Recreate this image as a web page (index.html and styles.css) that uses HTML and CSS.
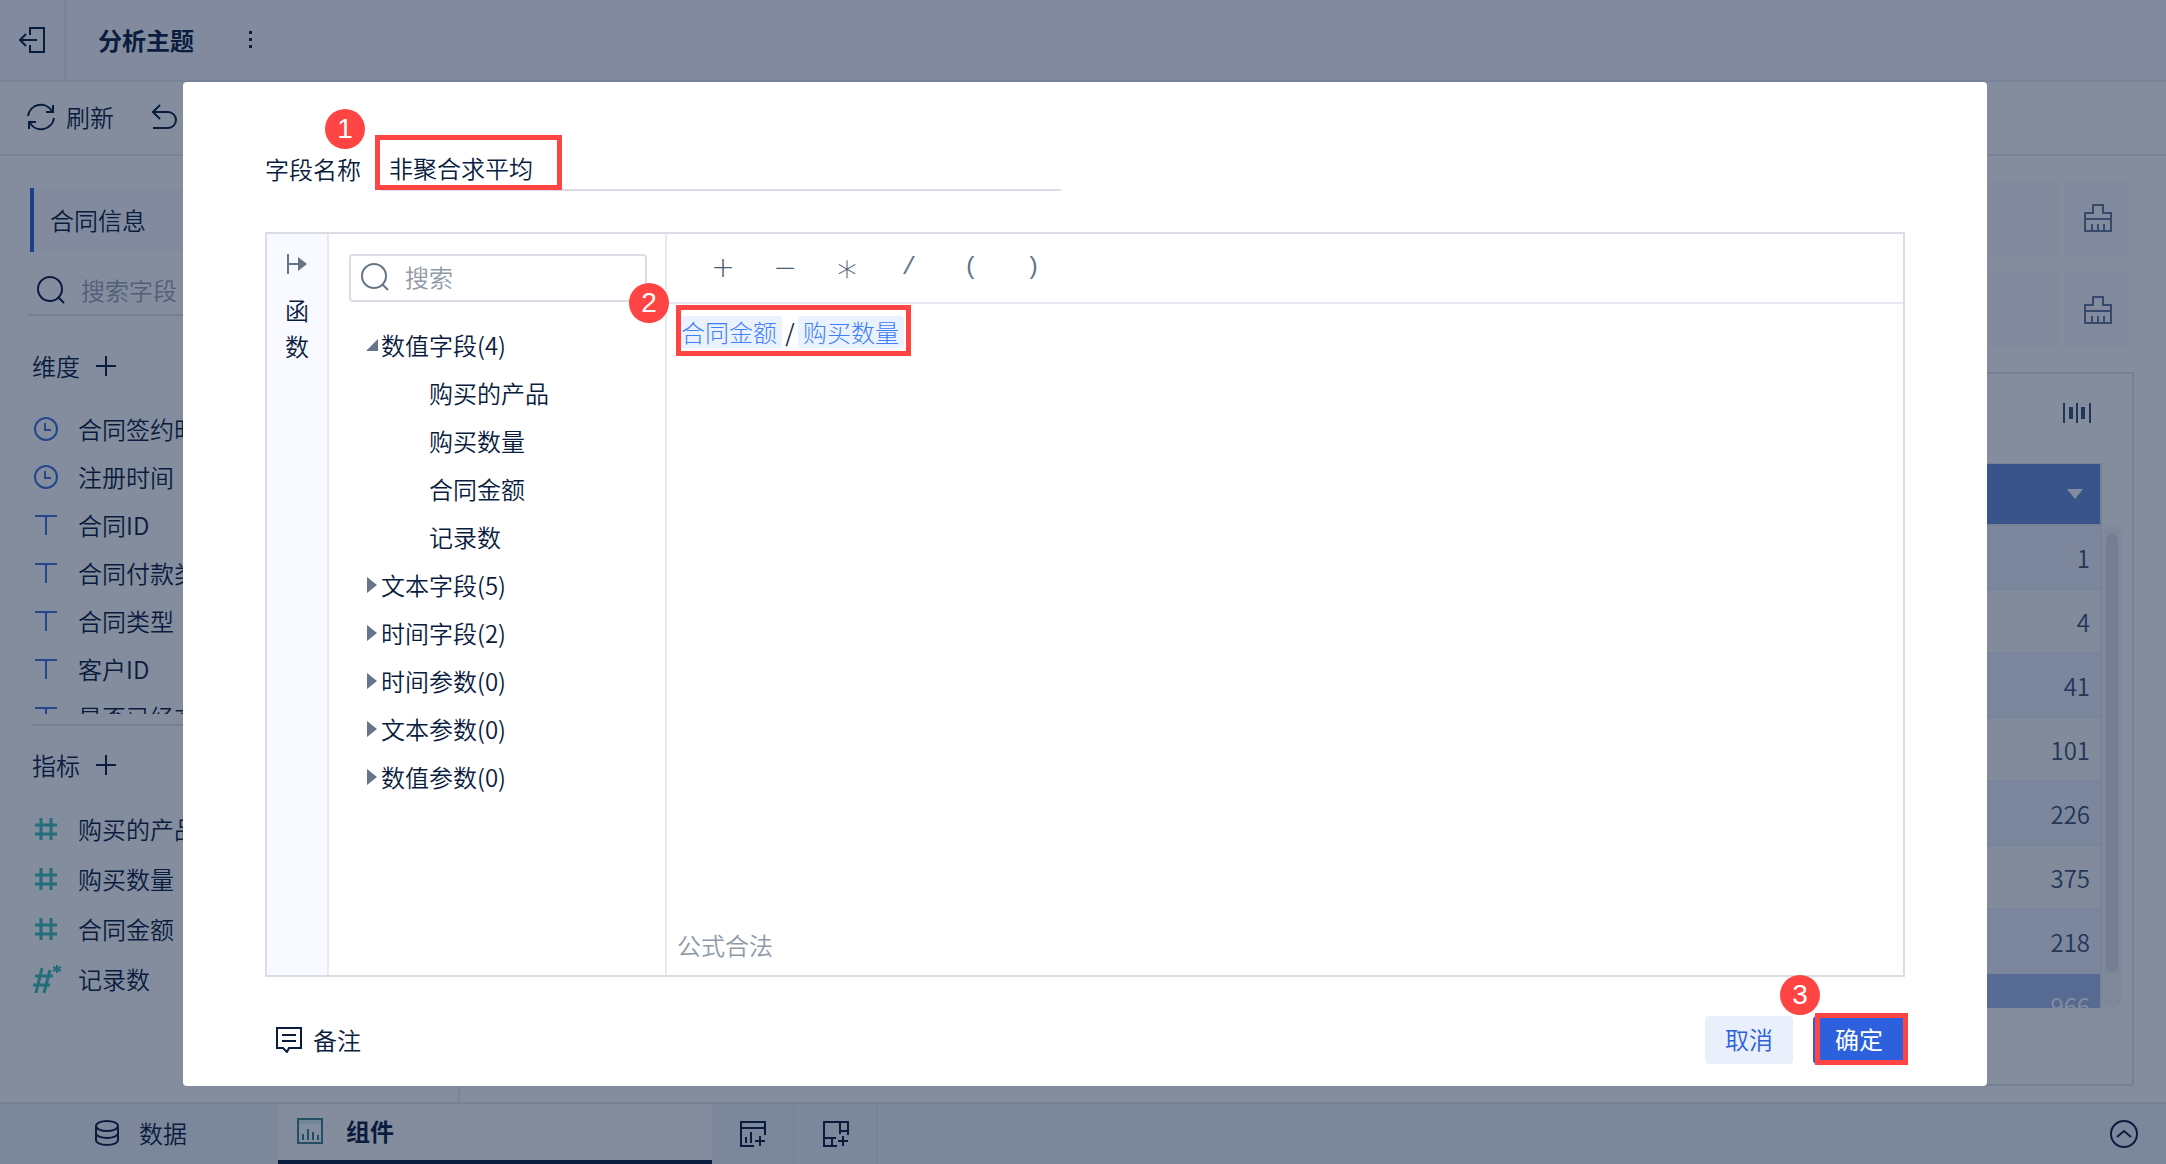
FILE: index.html
```html
<!DOCTYPE html>
<html lang="zh-CN">
<head>
<meta charset="utf-8">
<meta name="viewport" content="width=device-width, initial-scale=1">
<title>分析主题</title>
<link rel="stylesheet" href="styles.css">
</head>
<body>
<svg class="defs" aria-hidden="true">
  <symbol id="i-clock" viewBox="0 0 24 24"><circle cx="12" cy="12" r="11"/><path d="M11 6v7h6"/></symbol>
  <symbol id="i-text" viewBox="0 0 24 24"><path d="M1 3h22M12 3v19"/></symbol>
  <symbol id="i-hash" viewBox="0 0 24 24"><path d="M1 8h22M1 17h22M7 1v22M17 1v22"/></symbol>
  <symbol id="i-plus" viewBox="0 0 20 20"><path d="M10 0v20M0 10h20"/></symbol>
  <symbol id="i-search" viewBox="0 0 28 28"><circle cx="13" cy="13" r="12"/><path d="M21 21l6 6"/></symbol>
  <symbol id="i-brush" viewBox="0 0 28 28"><path d="M1 27V9h8V1h10v8h8v18zM1 15h26M8 27v-7M14 27v-7M20 27v-7"/></symbol>
</svg>

<div class="app">
  <header class="header">
    <button class="exit" aria-label="退出"><svg width="26" height="26" viewBox="0 0 26 26"><path d="M11 8V1h14v24H11v-7M18 13H1M7 7l-6 6 6 6"/></svg></button>
    <h1 class="title">分析主题</h1>
    <button class="more" aria-label="更多"><svg width="4" height="18" viewBox="0 0 4 18"><path class="solid" d="M0 0h3v3H0zM0 7h3v3H0zM0 14h3v3H0z"/></svg></button>
  </header>
  <div class="toolbar">
    <button class="tool"><svg width="28" height="28" viewBox="0 0 28 28"><path d="M1 13A13 13 0 0 1 25 8M26 2v7h-7M27 15A13 13 0 0 1 3 20M2 26v-7h7"/></svg>刷新</button>
    <button class="tool" aria-label="撤销"><svg width="26" height="26" viewBox="0 0 26 26"><path d="M8 1L1 8l7 7M1 8h15a8 8 0 0 1 0 16H1"/></svg></button>
  </div>

  <div class="body">
    <aside class="sidebar">
      <div class="source">合同信息</div>
      <label class="side-search"><svg width="28" height="28"><use href="#i-search"/></svg><input type="text" placeholder="搜索字段" aria-label="搜索字段"></label>
      <div class="group-head">维度<svg width="20" height="20"><use href="#i-plus"/></svg></div>
      <ul class="fields dims">
        <li><svg width="24" height="24"><use href="#i-clock"/></svg>合同签约时间</li>
        <li><svg width="24" height="24"><use href="#i-clock"/></svg>注册时间</li>
        <li><svg width="24" height="24"><use href="#i-text"/></svg>合同ID</li>
        <li><svg width="24" height="24"><use href="#i-text"/></svg>合同付款类型</li>
        <li><svg width="24" height="24"><use href="#i-text"/></svg>合同类型</li>
        <li><svg width="24" height="24"><use href="#i-text"/></svg>客户ID</li>
        <li><svg width="24" height="24"><use href="#i-text"/></svg>是否已经交货</li>
      </ul>
      <div class="group-head second">指标<svg width="20" height="20"><use href="#i-plus"/></svg></div>
      <ul class="fields metrics">
        <li><svg width="24" height="24"><use href="#i-hash"/></svg>购买的产品</li>
        <li><svg width="24" height="24"><use href="#i-hash"/></svg>购买数量</li>
        <li><svg width="24" height="24"><use href="#i-hash"/></svg>合同金额</li>
        <li><svg width="30" height="30" viewBox="0 0 30 30"><path d="M3 12h18M1 21h17M10 4L4 29M18 6l-6 23"/><path class="thin" d="M25 1v8M21 3l8 4M29 3l-8 4"/></svg>记录数</li>
      </ul>
    </aside>

    <main class="main">
      <div class="shelf"><div class="slot"></div><button class="brush" aria-label="清空"><svg width="28" height="28"><use href="#i-brush"/></svg></button></div>
      <div class="shelf"><div class="slot"></div><button class="brush" aria-label="清空"><svg width="28" height="28"><use href="#i-brush"/></svg></button></div>
      <section class="chart">
        <div class="chart-head"><svg width="28" height="20" viewBox="0 0 28 20"><path d="M1 0v20M14 0v20M27 0v20"/><path class="solid" d="M6 4h4v12H6zM18 4h4v12h-4z"/></svg></div>
        <div class="chart-body">
          <div class="table-clip">
            <table class="data">
              <thead><tr><th aria-label="记录数"><svg width="16" height="10" viewBox="0 0 16 10"><path d="M0 0h16L8 10z"/></svg></th></tr></thead>
              <tbody>
                <tr><td>1</td></tr>
                <tr><td>4</td></tr>
                <tr><td>41</td></tr>
                <tr><td>101</td></tr>
                <tr><td>226</td></tr>
                <tr><td>375</td></tr>
                <tr><td>218</td></tr>
                <tr class="sum"><td>966</td></tr>
              </tbody>
            </table>
          </div>
          <div class="track"><div class="thumb"></div></div>
        </div>
      </section>
    </main>
  </div>

  <nav class="tabs">
    <button class="tab data-tab"><svg width="24" height="26" viewBox="0 0 24 26"><ellipse cx="12" cy="6" rx="11" ry="5"/><path d="M1 6v14c0 3 5 5 11 5s11-2 11-5V6M1 13c0 3 5 5 11 5s11-2 11-5"/></svg>数据</button>
    <button class="tab part-tab"><svg width="26" height="26" viewBox="0 0 26 26"><path class="tint" d="M1 1h24v5H1z"/><path d="M1 1h24v24H1zM6 22v-6M11 22V11M16 22v-8M21 22v-5"/></svg>组件</button>
    <button class="tab add-tab" aria-label="添加组件"><svg width="26" height="26" viewBox="0 0 26 26"><path d="M14 25H1V1h24v13M1 7h24M6 22v-6M11 22V11M20 15v10M15 20h10"/></svg></button>
    <button class="tab add-tab" aria-label="添加仪表板"><svg width="26" height="26" viewBox="0 0 26 26"><path d="M14 25H1V1h24v13M17 1v12M17 10h8M1 17h12M9 17v8M20 15v10M15 20h10"/></svg></button>
    <button class="collapse" aria-label="展开"><svg width="28" height="28" viewBox="0 0 28 28"><circle cx="14" cy="14" r="13"/><path d="M7 17l7-6 7 6"/></svg></button>
  </nav>
</div>

<div class="backdrop">
  <div class="modal" role="dialog" aria-label="计算字段">
    <div class="name-row">
      <span class="badge badge-1">1</span>
      <label for="name">字段名称</label>
      <div class="name-box">
        <input id="name" type="text" value="非聚合求平均">
        <span class="mark mark-name"></span>
      </div>
    </div>

    <div class="panel">
      <button class="func"><svg width="20" height="20" viewBox="0 0 20 20"><path d="M1 0v20M1 10h12"/><path class="solid" d="M11 3l9 7-9 7z"/></svg><span>函</span><span>数</span></button>
      <div class="picker">
        <label class="search"><svg width="28" height="28"><use href="#i-search"/></svg><input type="text" placeholder="搜索" aria-label="搜索"></label>
        <ul class="tree">
          <li><svg width="12" height="12" viewBox="0 0 12 12"><path d="M12 0v12H0z"/></svg>数值字段(4)</li>
          <li class="leaf">购买的产品</li>
          <li class="leaf">购买数量</li>
          <li class="leaf">合同金额</li>
          <li class="leaf">记录数</li>
          <li><svg width="12" height="16" viewBox="0 0 12 16"><path d="M1 0l10 8-10 8z"/></svg>文本字段(5)</li>
          <li><svg width="12" height="16" viewBox="0 0 12 16"><path d="M1 0l10 8-10 8z"/></svg>时间字段(2)</li>
          <li><svg width="12" height="16" viewBox="0 0 12 16"><path d="M1 0l10 8-10 8z"/></svg>时间参数(0)</li>
          <li><svg width="12" height="16" viewBox="0 0 12 16"><path d="M1 0l10 8-10 8z"/></svg>文本参数(0)</li>
          <li><svg width="12" height="16" viewBox="0 0 12 16"><path d="M1 0l10 8-10 8z"/></svg>数值参数(0)</li>
        </ul>
      </div>
      <div class="editor">
        <div class="ops">
          <button class="wide">+</button><button class="wide">−</button><button class="wide star">∗</button><button>/</button><button>(</button><button>)</button>
        </div>
        <div class="formula">
          <span class="badge badge-2">2</span>
          <span class="token">合同金额</span><span class="slash">/</span><span class="token">购买数量</span>
          <span class="mark mark-formula"></span>
        </div>
        <div class="status">公式合法</div>
      </div>
    </div>

    <div class="footer">
      <button class="note"><svg width="26" height="26" viewBox="0 0 26 26"><path d="M1 1h24v20H13l-2 4-4-4H1zM6 8h14M6 14h14"/></svg>备注</button>
      <div class="actions">
        <button class="btn cancel">取消</button>
        <div class="ok-wrap">
          <button class="btn ok">确定</button>
          <span class="badge badge-3">3</span>
          <span class="mark mark-ok"></span>
        </div>
      </div>
    </div>
  </div>
</div>
</body>
</html>
```
FILE: styles.css
```css
:root {
  --ink: #0a1c3e;
  --line: #dadde6;
  --blue: #2c60dc;
  --red: #ff4444;
}

* { box-sizing: border-box; }

body {
  margin: 0;
  color: var(--ink);
  font: 350 24px/32px "Noto Sans CJK SC", "Noto Sans", sans-serif;
  overflow: hidden;
}

ul { list-style: none; margin: 0; padding: 0; }

button, input {
  margin: 0;
  padding: 0;
  border: 0;
  background: none;
  color: inherit;
  font: inherit;
}

svg {
  flex: none;
  display: block;
  fill: none;
  stroke: currentColor;
  stroke-width: 2;
}

.defs { position: absolute; width: 0; height: 0; }
.solid { fill: currentColor; stroke: none; }

/* Application behind the dialog */
.app { display: flex; flex-direction: column; height: 100vh; background: #fff; }

.header {
  display: flex;
  align-items: center;
  height: 82px;
  border-bottom: 2px solid #e6eaf0;
  background: #f8fafc;
}
.exit {
  align-self: stretch;
  display: grid;
  place-items: center;
  width: 66px;
  border-right: 2px solid #e9edf2;
}
.title { margin: 0 0 0 32px; font-size: 24px; line-height: 32px; font-weight: 700; }
.more { margin-left: 55px; }

.toolbar {
  display: flex;
  align-items: center;
  gap: 38px;
  height: 74px;
  padding: 0 0 2px 27px;
  border-bottom: 2px solid #e6eaf0;
}
.tool { display: flex; align-items: center; gap: 11px; }

.body { flex: 1; display: flex; min-height: 0; }

.sidebar { width: 460px; padding: 32px 28px 0; border-right: 2px solid #e6eaf0; }
.source {
  height: 64px;
  margin-left: 2px;
  padding: 16px;
  border-left: 4px solid var(--blue);
  background: #f8fafc;
}
.side-search {
  display: flex;
  align-items: center;
  gap: 16px;
  height: 64px;
  padding: 14px 9px 0;
  border-bottom: 2px solid #dfe3ea;
}
.side-search input { flex: 1; min-width: 0; }
.side-search input::placeholder { color: #9aa3b2; opacity: 1; }
.group-head {
  display: flex;
  align-items: center;
  gap: 16px;
  height: 32px;
  margin: 34px 4px 0;
}
.fields { margin-left: 4px; }
.fields li { display: flex; align-items: center; gap: 20px; padding-left: 2px; white-space: nowrap; }
.dims { height: 332px; padding-top: 23px; overflow: hidden; }
.dims li { height: 48px; }
.dims svg { color: #3f70d6; }
.second { height: 80px; margin-top: 10px; border-top: 2px solid #e0e4ec; }
.metrics li { height: 50px; }
.metrics svg { color: #3cc0b2; stroke-width: 3; }
.metrics .thin { stroke-width: 2; }
.metrics li:last-child { gap: 16px; padding-left: 0; }

.main {
  flex: 1;
  display: flex;
  flex-direction: column;
  padding: 24px 32px 16px 30px;
}
.shelf { display: flex; gap: 4px; height: 76px; margin-bottom: 16px; }
.slot { flex: 1; background: #f8fafc; }
.brush { display: grid; place-items: center; width: 70px; padding-right: 2px; background: #f8fafc; color: #66799b; }
.chart {
  flex: 1;
  min-height: 0;
  margin-top: 8px;
  border: 2px solid #e0e4ec;
}
.chart-head {
  display: flex;
  justify-content: flex-end;
  height: 89px;
  padding: 29px 41px 0;
  color: #3a5074;
}
.chart-body { display: flex; height: 545px; padding: 0 10px 0 30px; }
.table-clip { flex: 1; overflow: hidden; }
.data { width: 100%; border-spacing: 0; font: 350 24px/32px "Noto Sans CJK SC", sans-serif; color: #3e5070; }
.data th { height: 63px; padding: 0 17px 0 0; border: solid #e0e6ee; border-width: 1px 2px 2px 0; background: #668cd6; color: #fff; }
.data th svg { margin-left: auto; fill: currentColor; stroke: none; }
.data td { height: 64px; padding: 2px 10px 0 0; text-align: right; border: solid #e6ecf8; border-width: 0 2px 2px 0; background: #f8fafb; }
.data tbody tr:nth-child(odd) td { background: #eef3ff; }
.data tbody .sum td { background: #a4bbe6; color: #fff; }
.track { width: 20px; margin-top: 63px; padding: 8px 4px 36px; border-radius: 10px; background: #f3f4f7; }
.thumb { height: 100%; border-radius: 6px; background: #dce1e8; }

.tabs {
  display: flex;
  height: 62px;
  border-top: 2px solid #e0e4ec;
  background: #eff2f9;
}
.tab { display: flex; align-items: center; }
.data-tab { width: 278px; gap: 20px; padding: 0 0 2px 95px; }
.part-tab {
  width: 434px;
  gap: 23px;
  padding: 0 0 3px 19px;
  border-bottom: 4px solid var(--ink);
  background: #fff;
  font-weight: 700;
}
.part-tab svg { color: #3c8288; }
.part-tab .tint { fill: #d8f0f0; stroke: none; }
.add-tab { width: 83px; justify-content: center; border-right: 2px solid #e6eaf0; }
.collapse { margin: 0 28px 0 auto; }

/* Dialog */
.backdrop {
  position: fixed;
  inset: 0;
  display: flex;
  padding: 82px 179px 78px 183px;
  background: rgba(10, 28, 62, .5);
}
.modal {
  flex: 1;
  display: flex;
  flex-direction: column;
  padding: 65px 82px 22px;
  border-radius: 4px;
  background: #fff;
}

.name-row { position: relative; display: flex; align-items: center; gap: 20px; height: 44px; margin-bottom: 41px; }
.name-box { position: relative; width: 680px; height: 44px; border-bottom: 2px solid var(--line); }
.name-box input { width: 100%; height: 100%; padding: 0 0 2px 8px; }

.panel { flex: 1; display: flex; min-height: 0; border: 2px solid var(--line); }
.func {
  display: flex;
  flex-direction: column;
  align-items: center;
  width: 62px;
  padding-top: 20px;
  border-right: 2px solid #e6e9f2;
  background: #f8faff;
}
.func span { line-height: 36px; }
.func svg { margin-bottom: 18px; color: #667389; }
.picker { width: 338px; padding: 20px 18px 0 20px; border-right: 2px solid #e6e9f2; }
.search {
  display: flex;
  align-items: center;
  gap: 16px;
  height: 48px;
  padding: 0 10px 2px;
  border: 2px solid var(--line);
  border-radius: 4px;
}
.search svg { color: #667389; }
.search input { flex: 1; min-width: 0; }
.search input::placeholder { color: #8f99a8; opacity: 1; }
.tree { padding: 19px 0 0 17px; }
.tree li { display: flex; align-items: center; gap: 3px; height: 48px; }
.tree svg { fill: #667389; stroke: none; }
.tree .leaf { padding-left: 63px; }

.editor { flex: 1; display: flex; flex-direction: column; }
.ops { display: flex; height: 70px; padding-left: 25px; border-bottom: 2px solid #e6e9f2; }
.ops button { width: 62px; color: #667389; font-family: "Liberation Mono", monospace; }
.ops .wide { font: 200 28px/32px "DejaVu Sans", sans-serif; color: #4c5a72; }
.ops .star { font-size: 40px; }
.formula {
  position: relative;
  flex: 1;
  display: flex;
  align-items: flex-start;
  padding: 12px 0 0 9px;
}
.token { padding: 0 5px; border-radius: 4px; background: #eaf2ff; color: #3f80f8; font-weight: 300; }
.slash { width: 16px; text-align: center; }
.status { padding: 0 10px 14px; color: #8f99a8; }

.footer { display: flex; justify-content: space-between; align-items: center; margin-top: 39px; }
.note { display: flex; align-items: center; gap: 11px; padding-left: 11px; }
.actions { display: flex; gap: 20px; }
.btn { height: 48px; padding-bottom: 2px; border-radius: 4px; }
.cancel { width: 88px; background: #e9effb; color: var(--blue); }
.ok-wrap { position: relative; }
.ok { width: 92px; background: var(--blue); color: #fff; font-weight: 400; }

/* Step markers laid over the dialog */
.badge {
  position: absolute;
  z-index: 1;
  width: 40px;
  height: 40px;
  border-radius: 50%;
  background: var(--red);
  color: #fff;
  font: 28px/40px "Liberation Sans", sans-serif;
  text-align: center;
}
.mark { position: absolute; border: 5px solid var(--red); pointer-events: none; }
.badge-1 { left: 60px; top: -38px; }
.badge-2 { left: -38px; top: -21px; }
.badge-3 { left: -33px; top: -41px; }
.mark-name { left: -6px; top: -12px; width: 187px; height: 55px; }
.mark-formula { left: 9px; top: 1px; width: 235px; height: 51px; }
.mark-ok { left: 2px; top: -3px; width: 93px; height: 52px; }
```
